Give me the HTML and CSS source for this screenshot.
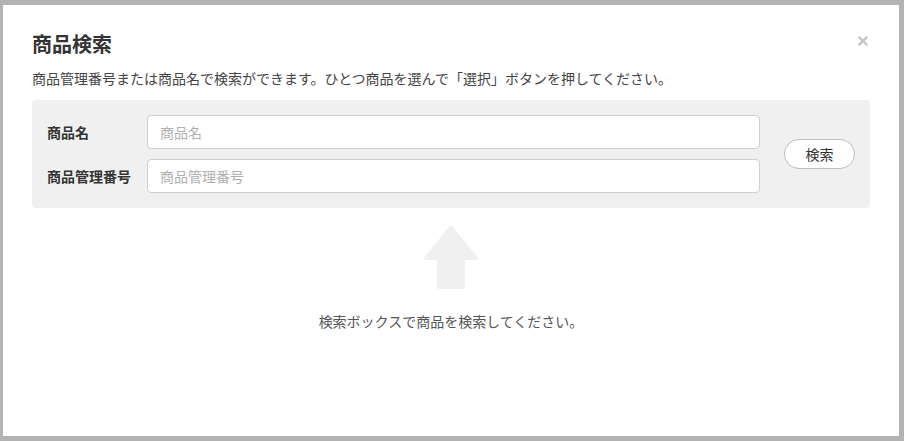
FILE: index.html
```html
<!DOCTYPE html>
<html lang="ja">
<head>
<meta charset="utf-8">
<link rel="stylesheet" href="styles.css">
</head>
<body>
<div class="modal">
  <div class="modal-header">
    <h1 class="modal-title">商品検索</h1>
    <svg class="modal-close" width="10" height="10" viewBox="0 0 10 10" aria-label="閉じる">
      <path d="M1.5 1.5 L8.5 8.5 M8.5 1.5 L1.5 8.5" stroke="#c6c6c6" stroke-width="2.4" stroke-linecap="square"/>
    </svg>
  </div>
  <p class="modal-desc">商品管理番号または商品名で検索ができます。ひとつ商品を選んで「選択」ボタンを押してください。</p>
  <div class="search-panel">
    <div class="search-fields">
      <label class="field-label">商品名</label>
      <input class="field-input" type="text" placeholder="商品名">
      <label class="field-label">商品管理番号</label>
      <input class="field-input" type="text" placeholder="商品管理番号">
    </div>
    <button class="search-btn" type="button">検索</button>
  </div>
  <div class="empty-state">
    <svg class="empty-arrow" width="56" height="64" viewBox="0 0 56 64">
      <path d="M26.5 1.2 Q28 -0.2 29.5 1.2 L55 33 Q56 35 54 35 L42 35 L42 62 Q42 64 40 64 L16 64 Q14 64 14 62 L14 35 L2 35 Q0 35 1 33 Z" fill="#f0f0f0"/>
    </svg>
    <p class="empty-text">検索ボックスで商品を検索してください。</p>
  </div>
</div>
</body>
</html>
```
FILE: styles.css
```css
html, body {
  margin: 0;
  padding: 0;
}
body {
  background: #b3b3b3;
  font-family: "Noto Sans CJK JP", "Noto Sans", sans-serif;
  color: #333;
}
.modal {
  margin: 5px 5px 5px 3px;
  height: 431px;
  background: #fff;
  padding: 25px 29px 0;
  box-sizing: border-box;
}
.modal-header {
  display: flex;
  justify-content: space-between;
  align-items: flex-start;
}
.modal-title {
  margin: 0;
  font-size: 20px;
  line-height: 28px;
  font-weight: bold;
  color: #333;
}
.modal-close {
  display: block;
  margin-top: 6px;
  margin-right: 2px;
}
.modal-desc {
  margin: 10px 0 0;
  font-size: 14px;
  line-height: 20px;
  color: #444;
}
.search-panel {
  margin-top: 12px;
  background: #f0f0f0;
  border-radius: 4px;
  padding: 15px;
  display: flex;
  align-items: center;
  gap: 24px;
}
.search-fields {
  flex: 1;
  display: grid;
  grid-template-columns: 100px 1fr;
  row-gap: 10px;
  align-items: center;
}
.field-label {
  font-size: 14px;
  font-weight: bold;
  color: #333;
  line-height: 20px;
}
.field-input {
  height: 34px;
  box-sizing: border-box;
  border: 1px solid #cfcfcf;
  border-radius: 4px;
  background: #fff;
  padding: 0 12px;
  font-family: inherit;
  font-size: 14px;
  color: #333;
  outline: none;
}
.field-input::placeholder {
  color: #b0b0b0;
}
.search-btn {
  width: 71px;
  height: 30px;
  border: 1px solid #bdbdbd;
  border-radius: 15px;
  background: #fff;
  font-family: inherit;
  font-size: 14px;
  color: #333;
  padding: 0;
  cursor: pointer;
}
.empty-state {
  display: flex;
  flex-direction: column;
  align-items: center;
  margin-top: 17px;
}
.empty-arrow {
  display: block;
}
.empty-text {
  margin: 22px 0 0;
  font-size: 14px;
  line-height: 20px;
  color: #555;
}
```
